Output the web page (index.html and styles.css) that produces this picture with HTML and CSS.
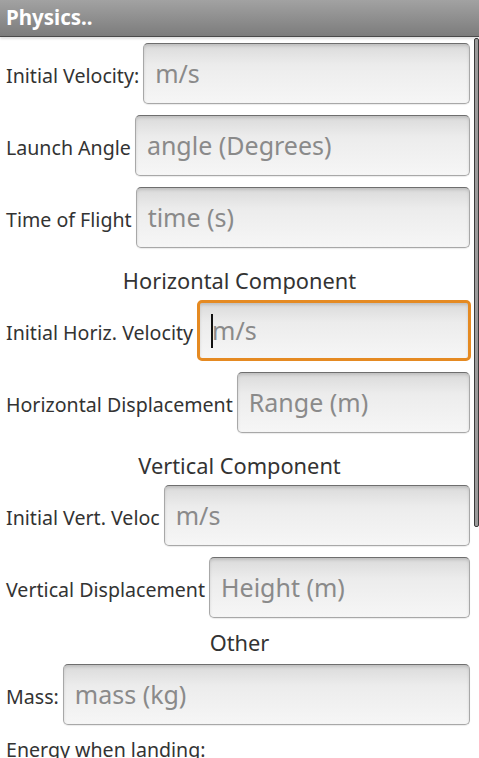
FILE: index.html
```html
<!DOCTYPE html>
<html>
<head>
<meta charset="utf-8">
<link rel="stylesheet" href="styles.css">
</head>
<body>
<div class="titlebar">Physics..</div>
<div class="content">
  <div class="row"><span class="label">Initial Velocity:</span><div class="field"><span class="hint">m/s</span></div></div>
  <div class="row"><span class="label">Launch Angle</span><div class="field"><span class="hint">angle (Degrees)</span></div></div>
  <div class="row"><span class="label">Time of Flight</span><div class="field"><span class="hint">time (s)</span></div></div>
  <div class="heading">Horizontal Component</div>
  <div class="row"><span class="label">Initial Horiz. Velocity</span><div class="field focused"><span class="cursor"></span><span class="hint">m/s</span></div></div>
  <div class="row"><span class="label">Horizontal Displacement</span><div class="field"><span class="hint">Range (m)</span></div></div>
  <div class="heading">Vertical Component</div>
  <div class="row"><span class="label">Initial Vert. Veloc</span><div class="field"><span class="hint">m/s</span></div></div>
  <div class="row"><span class="label">Vertical Displacement</span><div class="field"><span class="hint">Height (m)</span></div></div>
  <div class="heading heading-other">Other</div>
  <div class="row"><span class="label">Mass:</span><div class="field"><span class="hint">mass (kg)</span></div></div>
  <div class="label plain">Energy when landing:</div>
</div>
<div class="scrollbar"></div>
</body>
</html>
```
FILE: styles.css
```css
html, body {
  margin: 0;
  padding: 0;
  background: #ffffff;
  overflow: hidden;
  height: 758px;
}
body {
  font-family: "Noto Sans", "Open Sans", sans-serif;
  position: relative;
}
.titlebar {
  height: 36px;
  background: linear-gradient(#a2a2a2, #7c7c7c);
  border-bottom: 1px solid #4a4a4a;
  color: #ffffff;
  font-weight: bold;
  font-size: 20.5px;
  line-height: 34px;
  padding-left: 6px;
  box-shadow: 0 2px 2px rgba(0,0,0,0.12);
}
.content {
  padding: 6px 9px 0 6px;
}
.row {
  display: flex;
  align-items: center;
  height: 61px;
  margin-bottom: 11px;
}
.label {
  color: #333333;
  font-size: 19.6px;
  white-space: nowrap;
  margin-right: 4px;
  padding-top: 4px;
}
.field {
  flex: 1;
  height: 61px;
  box-sizing: border-box;
  border: 1px solid #a8a8a8;
  border-top-color: #6e6e6e;
  border-radius: 5px;
  background: linear-gradient(#dadada 0%, #ececec 35%, #f6f6f6 100%);
  box-shadow: inset 0 2px 3px rgba(0,0,0,0.12), 0 1px 1px rgba(0,0,0,0.08);
  display: flex;
  align-items: center;
  padding-left: 11px;
}
.field.focused {
  border: 3px solid #e58a22;
  padding-left: 11px;
  margin-right: -1px;
  box-shadow: inset 0 2px 3px rgba(0,0,0,0.12);
}
.hint {
  color: #8a8a8a;
  font-size: 25px;
  padding-bottom: 2px;
}
.cursor {
  display: inline-block;
  width: 2px;
  height: 34px;
  background: #111111;
  margin-right: -1px;
}
.heading {
  text-align: center;
  color: #333333;
  font-size: 21.8px;
  line-height: 26px;
  padding: 9px 0 6px 0;
  margin-left: 3px;
}
.heading-other {
  padding: 1px 0 8px 0;
}
.plain {
  display: block;
  padding-top: 0;
}
.scrollbar {
  position: absolute;
  left: 474px;
  top: 38px;
  width: 3px;
  height: 487px;
  background: #9a9a9a;
  border: 1px solid #3a3a3a;
  border-radius: 2px;
}
```
